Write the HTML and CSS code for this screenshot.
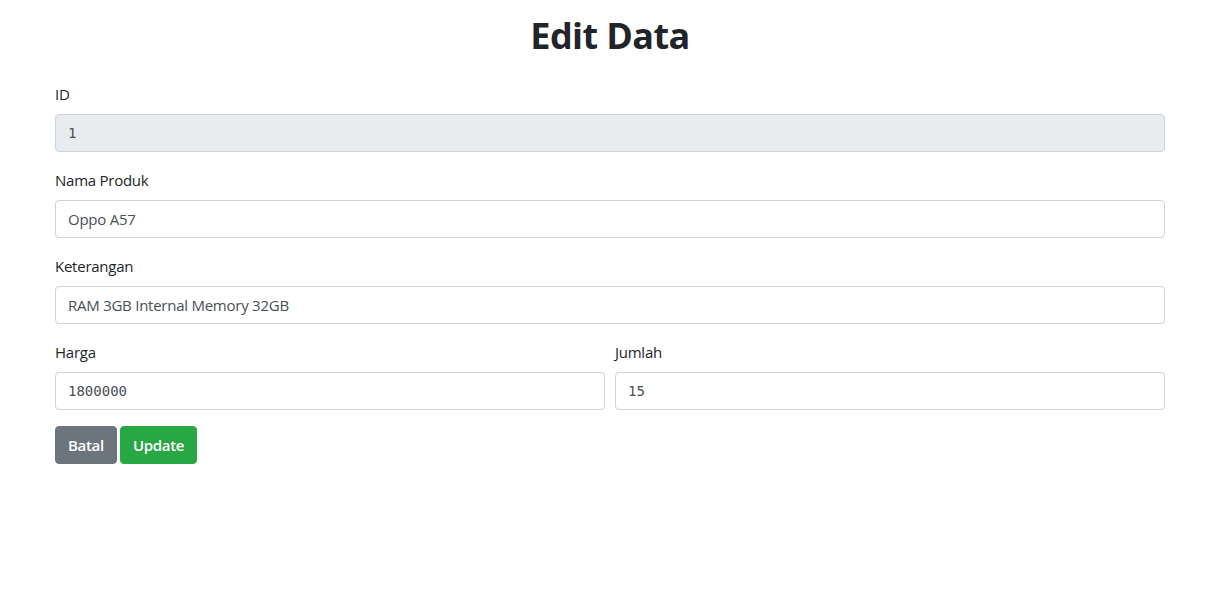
FILE: index.html
```html
<!DOCTYPE html>
<html lang="id">
<head>
<meta charset="utf-8">
<title>Edit Data</title>
<link rel="stylesheet" href="styles.css">
</head>
<body>
<div class="page">
  <div class="container">
    <h1 class="title">Edit Data</h1>
    <form class="form">
      <div class="form-group">
        <label class="label">ID</label>
        <div class="control control-disabled mono">1</div>
      </div>
      <div class="form-group">
        <label class="label">Nama Produk</label>
        <div class="control">Oppo A57</div>
      </div>
      <div class="form-group">
        <label class="label">Keterangan</label>
        <div class="control">RAM 3GB Internal Memory 32GB</div>
      </div>
      <div class="form-row">
        <div class="form-group">
          <label class="label">Harga</label>
          <div class="control mono">1800000</div>
        </div>
        <div class="form-group">
          <label class="label">Jumlah</label>
          <div class="control mono">15</div>
        </div>
      </div>
      <div class="actions">
        <a class="btn btn-secondary">Batal</a>
        <button type="button" class="btn btn-success">Update</button>
      </div>
    </form>
  </div>
</div>
</body>
</html>
```

FILE: styles.css
```css
* { box-sizing: border-box; }
html, body { margin: 0; padding: 0; background: #fff; }
body {
  font-family: "Open Sans", "Noto Sans", sans-serif;
  font-size: 15px;
  line-height: 24px;
  letter-spacing: -0.25px;
  color: #212529;
}
.page { width: 1220px; }
.container { width: 1110px; margin: 0 auto; }
.title {
  margin: 12px 0 8px;
  font-size: 36px;
  line-height: 48px;
  font-weight: 700;
  text-align: center;
  letter-spacing: -0.6px;
}
.form { margin-top: 22px; }
.form-group { margin-bottom: 16px; }
.label { display: block; margin-bottom: 8px; height: 24px; }
.control {
  height: 38px;
  padding: 6px 12px;
  border: 1px solid #ced4da;
  border-radius: 4px;
  color: #495057;
  font-size: 15px;
  line-height: 24px;
  background: #fff;
}
.control-disabled { background: #e9ecef; }
.mono {
  font-family: "DejaVu Sans Mono", "Liberation Mono", monospace;
  font-size: 14px;
  letter-spacing: 0;
}
.form-row { display: grid; grid-template-columns: 1fr 1fr; column-gap: 10px; }
.actions { display: flex; gap: 3px; }
.btn {
  display: inline-block;
  height: 38px;
  padding: 6px 12px;
  border: 1px solid transparent;
  border-radius: 4px;
  color: #fff;
  font-family: inherit;
  font-size: 15px;
  font-weight: 600;
  line-height: 24px;
  letter-spacing: -0.3px;
}
.btn-secondary { background: #6c757d; border-color: #6c757d; }
.btn-success { background: #28a745; border-color: #28a745; }
```
